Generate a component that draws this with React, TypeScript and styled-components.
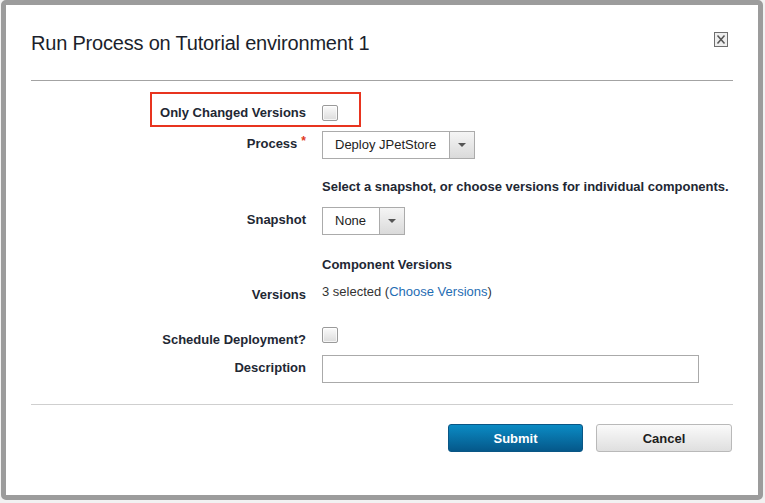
import React from "react";
import styled, { createGlobalStyle } from "styled-components";

const GlobalStyle = createGlobalStyle`
  *, *::before, *::after { box-sizing: border-box; }
  html, body { margin: 0; padding: 0; }
  body {
    background: #f2f2f2;
    font-family: "Liberation Sans", Arial, sans-serif;
    color: #222733;
  }
`;

const Page = styled.div`
  width: 765px;
  height: 503px;
  padding-left: 1px;
`;

const Dialog = styled.div`
  width: 762px;
  height: 500px;
  background: #ffffff;
  border: 5px solid #9c9c9c;
  border-radius: 5px;
  padding: 0 25px;
  display: flex;
  flex-direction: column;
`;

const Header = styled.div`
  height: 76px;
  padding-top: 26px;
  border-bottom: 1px solid #a3a3a3;
  display: flex;
  justify-content: space-between;
  align-items: flex-start;
`;

const Title = styled.h1`
  margin: 0;
  font-size: 20px;
  line-height: 24px;
  font-weight: normal;
  letter-spacing: -0.2px;
  color: #1b1f2c;
`;

const CloseButton = styled.button`
  margin: 1px 5px 0 0;
  padding: 0;
  width: 14px;
  height: 15px;
  border: none;
  background: none;
  display: block;
  cursor: pointer;
`;

const Form = styled.div`
  padding-top: 19px;
  display: flex;
  flex-direction: column;
`;

const Row = styled.div<{ $mt?: number }>`
  position: relative;
  display: flex;
  align-items: flex-start;
  gap: 16px;
  margin-top: ${(p) => p.$mt ?? 0}px;
`;

const Label = styled.div`
  width: 275px;
  flex-shrink: 0;
  text-align: right;
  font-size: 13px;
  font-weight: bold;
  line-height: 16px;
  padding-top: 5px;
  color: #222733;
`;

const Required = styled.span`
  color: #e0391c;
  font-size: 12px;
  line-height: 10px;
  vertical-align: top;
  margin-left: 4px;
`;

const Highlight = styled.span`
  position: absolute;
  left: 119px;
  top: -8px;
  width: 211px;
  height: 35px;
  border: 2px solid #e8341f;
  pointer-events: none;
`;

const Checkbox = styled.span<{ $top?: number }>`
  display: block;
  width: 16px;
  height: 16px;
  margin-top: ${(p) => p.$top ?? 0}px;
  border: 1px solid #9a9a9a;
  border-radius: 2px;
  background: linear-gradient(#fbfbfb, #dcdcdc);
  box-shadow: inset 0 0 0 1px rgba(255, 255, 255, 0.7);
`;

const Select = styled.div`
  display: flex;
  height: 28px;
  border: 1px solid #ababab;
  background: #fff;
`;

const SelectValue = styled.span`
  padding: 0 13px 0 12px;
  font-size: 13px;
  line-height: 26px;
  color: #222;
  white-space: nowrap;
`;

const SelectArrow = styled.span`
  width: 25px;
  border-left: 1px solid #ababab;
  background: linear-gradient(#f5f5f5, #dadada);
  display: flex;
  align-items: center;
  justify-content: center;
  &::after {
    content: "";
    border-left: 4px solid transparent;
    border-right: 4px solid transparent;
    border-top: 4px solid #555;
  }
`;

const FieldText = styled.div<{ $mt?: number; $bold?: boolean }>`
  margin-left: 291px;
  margin-top: ${(p) => p.$mt ?? 0}px;
  font-size: 13px;
  line-height: 16px;
  font-weight: ${(p) => (p.$bold ? "bold" : "normal")};
  color: #222733;
  white-space: nowrap;
`;

const Value = styled.div`
  font-size: 13px;
  line-height: 16px;
  padding-top: 2px;
  color: #333;
`;

const Link = styled.a`
  color: #1f6db3;
  text-decoration: none;
`;

const TextInput = styled.input`
  width: 377px;
  height: 28px;
  border: 1px solid #aaaaaa;
  padding: 0 6px;
  font-family: inherit;
  font-size: 13px;
  outline: none;
`;

const Footer = styled.div`
  margin-top: 21px;
  border-top: 1px solid #cfcfcf;
  padding: 19px 1px 0 0;
  display: flex;
  justify-content: flex-end;
  gap: 13px;
`;

const Button = styled.button<{ $primary?: boolean }>`
  width: ${(p) => (p.$primary ? 135 : 136)}px;
  height: 28px;
  border-radius: 3px;
  font-family: inherit;
  font-size: 13px;
  font-weight: bold;
  cursor: pointer;
  border: 1px solid ${(p) => (p.$primary ? "#0a5685" : "#b9b9b9")};
  color: ${(p) => (p.$primary ? "#ffffff" : "#1d1d1d")};
  background: ${(p) =>
    p.$primary
      ? "linear-gradient(#0b8bc4, #05588a)"
      : "linear-gradient(#fafafa, #dfdfdf)"};
`;

const CloseIcon = () => (
  <svg width="14" height="15" viewBox="0 0 14 15">
    <rect x="0.5" y="0.5" width="13" height="14" fill="#eeeeee" stroke="#6e6e6e" />
    <path d="M3.5 3.5 L10.5 11.5 M10.5 3.5 L3.5 11.5" stroke="#555555" strokeWidth="1.5" />
  </svg>
);

export default function App() {
  return (
    <>
      <GlobalStyle />
      <Page>
        <Dialog>
          <Header>
            <Title>Run Process on Tutorial environment 1</Title>
            <CloseButton aria-label="Close">
              <CloseIcon />
            </CloseButton>
          </Header>
          <Form>
            <Row>
              <Label>Only Changed Versions</Label>
              <Checkbox $top={5} />
              <Highlight />
            </Row>
            <Row $mt={10}>
              <Label>
                Process<Required>*</Required>
              </Label>
              <Select>
                <SelectValue>Deploy JPetStore</SelectValue>
                <SelectArrow />
              </Select>
            </Row>
            <FieldText $mt={20} $bold>
              Select a snapshot, or choose versions for individual components.
            </FieldText>
            <Row $mt={12}>
              <Label>Snapshot</Label>
              <Select>
                <SelectValue>None</SelectValue>
                <SelectArrow />
              </Select>
            </Row>
            <FieldText $mt={22} $bold>
              Component Versions
            </FieldText>
            <Row $mt={9}>
              <Label>Versions</Label>
              <Value>
                3 selected (<Link href="#">Choose Versions</Link>)
              </Value>
            </Row>
            <Row $mt={24}>
              <Label>Schedule Deployment?</Label>
              <Checkbox />
            </Row>
            <Row $mt={7}>
              <Label>Description</Label>
              <TextInput />
            </Row>
          </Form>
          <Footer>
            <Button $primary>Submit</Button>
            <Button>Cancel</Button>
          </Footer>
        </Dialog>
      </Page>
    </>
  );
}
